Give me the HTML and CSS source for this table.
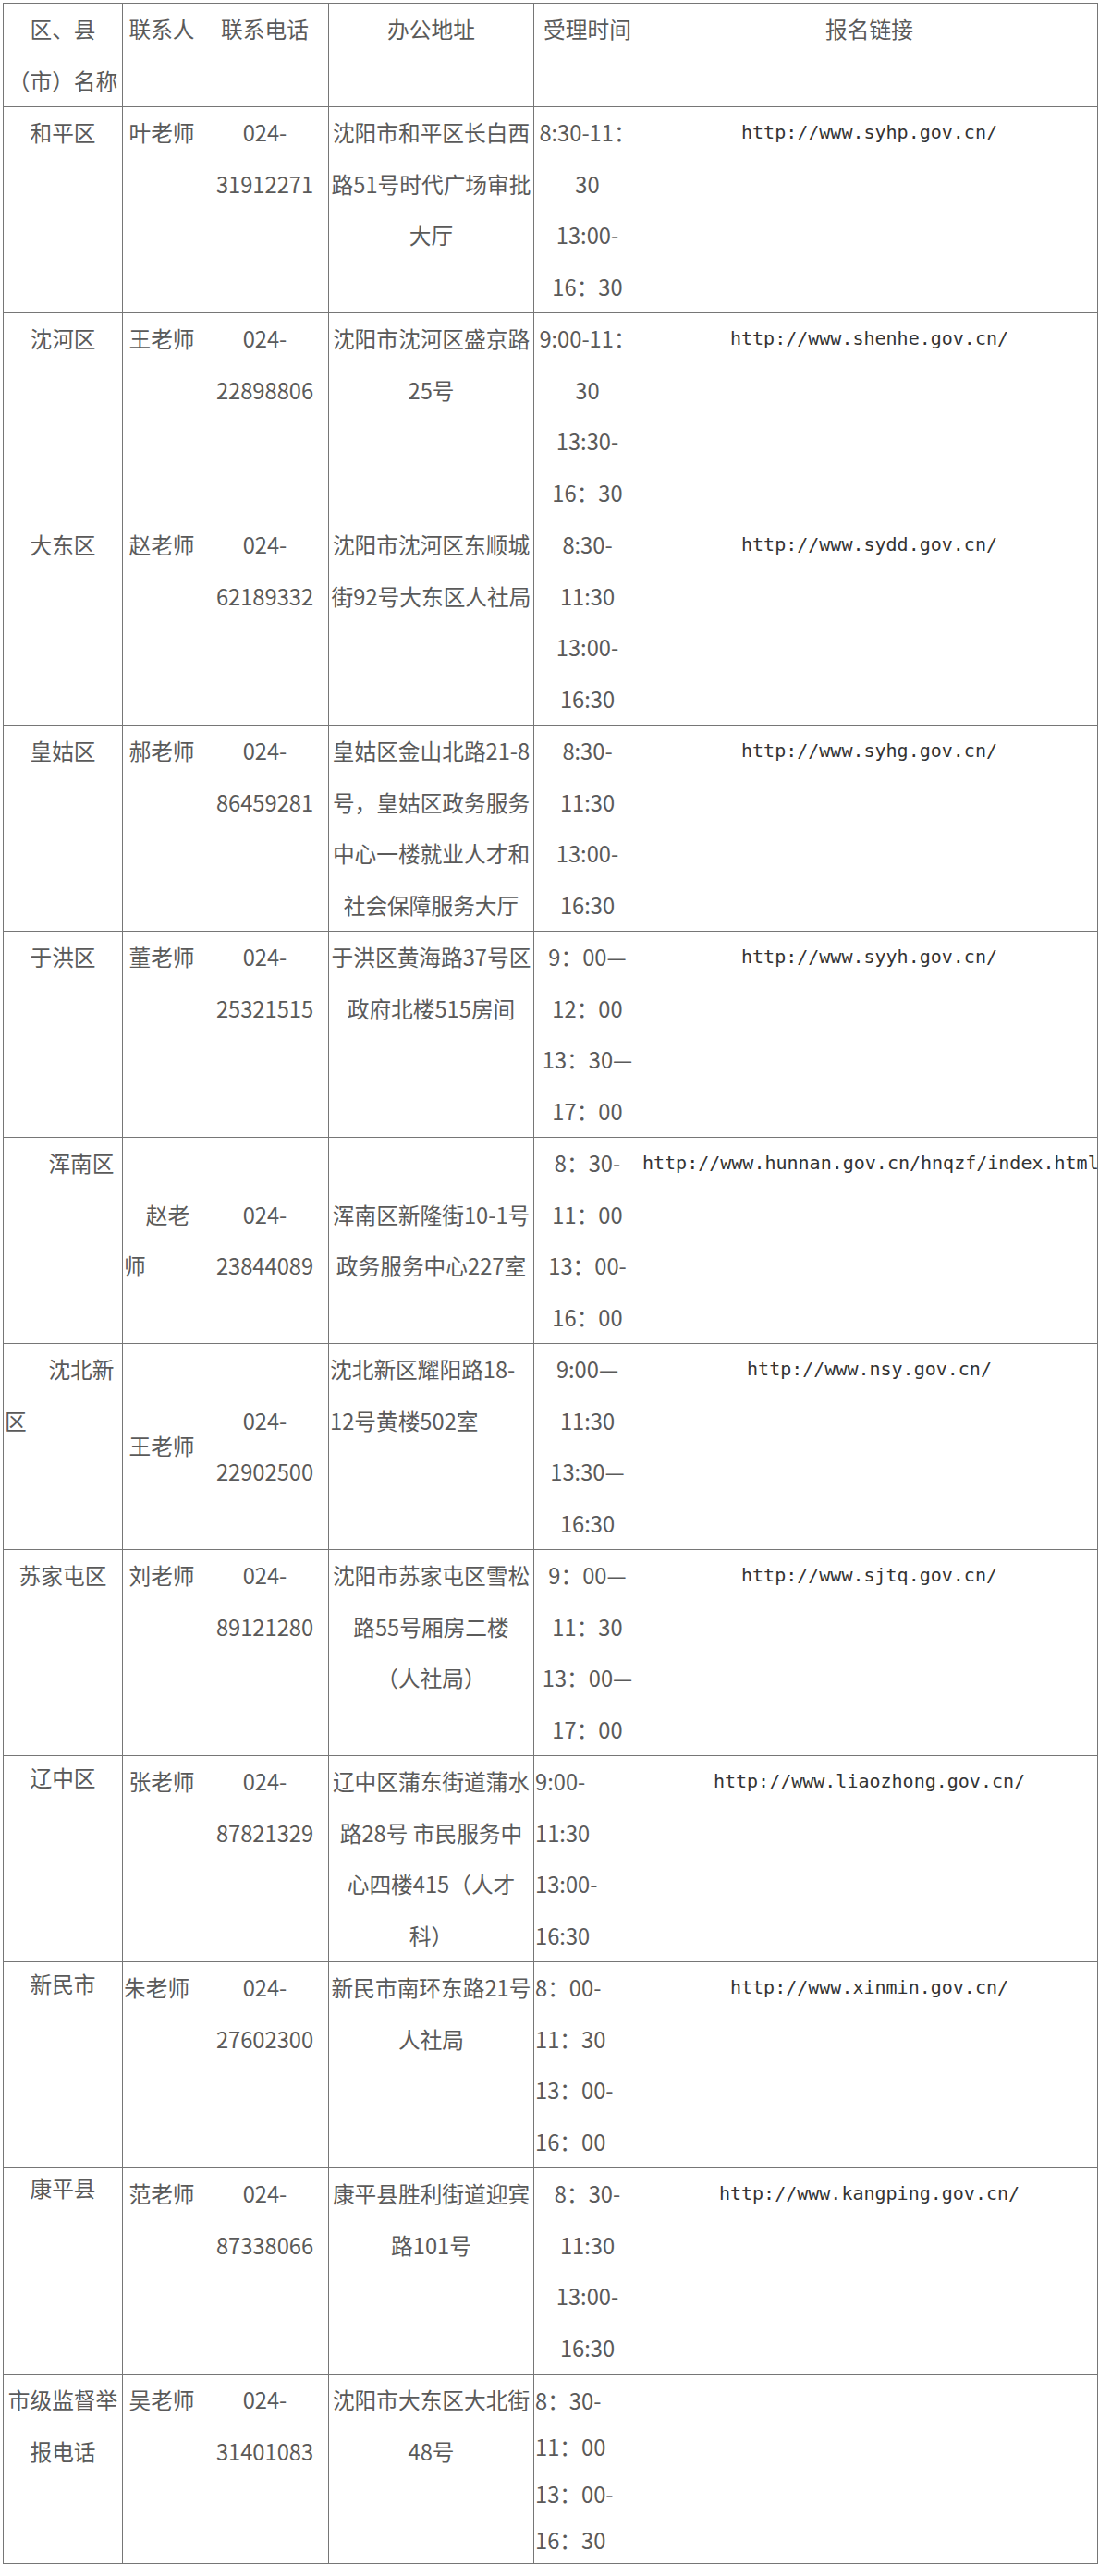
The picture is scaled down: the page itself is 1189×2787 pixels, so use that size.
FILE: index.html
```html
<!DOCTYPE html>
<html lang="zh-CN">
<head>
<meta charset="utf-8">
<title>报名点联系方式</title>
<link rel="stylesheet" href="styles.css">
</head>
<body>
<table class="info">
  <colgroup>
    <col class="c-name"><col class="c-person"><col class="c-phone"><col class="c-addr"><col class="c-time"><col class="c-link">
  </colgroup>
  <thead>
    <tr>
      <th>区、县<br>（市）名称</th>
      <th>联系人</th>
      <th>联系电话</th>
      <th>办公地址</th>
      <th>受理时间</th>
      <th>报名链接</th>
    </tr>
  </thead>
  <tbody>
    <tr>
      <td>和平区</td>
      <td>叶老师</td>
      <td>024-<br>31912271</td>
      <td>沈阳市和平区长白西<br>路51号时代广场审批<br>大厅</td>
      <td>8:30-11：<br>30<br>13:00-<br>16：30</td>
      <td class="url">http://www.syhp.gov.cn/</td>
    </tr>
    <tr>
      <td>沈河区</td>
      <td>王老师</td>
      <td>024-<br>22898806</td>
      <td>沈阳市沈河区盛京路<br>25号</td>
      <td>9:00-11：<br>30<br>13:30-<br>16：30</td>
      <td class="url">http://www.shenhe.gov.cn/</td>
    </tr>
    <tr>
      <td>大东区</td>
      <td>赵老师</td>
      <td>024-<br>62189332</td>
      <td>沈阳市沈河区东顺城<br>街92号大东区人社局</td>
      <td>8:30-<br>11:30<br>13:00-<br>16:30</td>
      <td class="url">http://www.sydd.gov.cn/</td>
    </tr>
    <tr>
      <td>皇姑区</td>
      <td>郝老师</td>
      <td>024-<br>86459281</td>
      <td>皇姑区金山北路21-8<br>号，皇姑区政务服务<br>中心一楼就业人才和<br>社会保障服务大厅</td>
      <td>8:30-<br>11:30<br>13:00-<br>16:30</td>
      <td class="url">http://www.syhg.gov.cn/</td>
    </tr>
    <tr>
      <td>于洪区</td>
      <td>董老师</td>
      <td>024-<br>25321515</td>
      <td>于洪区黄海路37号区<br>政府北楼515房间</td>
      <td>9：00—<br>12：00<br>13：30—<br>17：00</td>
      <td class="url">http://www.syyh.gov.cn/</td>
    </tr>
    <tr>
      <td class="indent2">浑南区</td>
      <td class="indent1 mid">赵老<br>师</td>
      <td class="mid">024-<br>23844089</td>
      <td class="mid">浑南区新隆街10-1号<br>政务服务中心227室</td>
      <td>8：30-<br>11：00<br>13：00-<br>16：00</td>
      <td class="url">http://www.hunnan.gov.cn/hnqzf/index.html</td>
    </tr>
    <tr>
      <td class="indent2">沈北新<br>区</td>
      <td class="mid">王老师</td>
      <td class="mid">024-<br>22902500</td>
      <td class="left">沈北新区耀阳路18-<br>12号黄楼502室</td>
      <td>9:00—<br>11:30<br>13:30—<br>16:30</td>
      <td class="url">http://www.nsy.gov.cn/</td>
    </tr>
    <tr>
      <td>苏家屯区</td>
      <td>刘老师</td>
      <td>024-<br>89121280</td>
      <td>沈阳市苏家屯区雪松<br>路55号厢房二楼<br>（人社局）</td>
      <td>9：00—<br>11：30<br>13：00—<br>17：00</td>
      <td class="url">http://www.sjtq.gov.cn/</td>
    </tr>
    <tr>
      <td class="raised">辽中区</td>
      <td>张老师</td>
      <td>024-<br>87821329</td>
      <td>辽中区蒲东街道蒲水<br>路28号 市民服务中<br>心四楼415（人才<br>科）</td>
      <td class="left">9:00-<br>11:30<br>13:00-<br>16:30</td>
      <td class="url">http://www.liaozhong.gov.cn/</td>
    </tr>
    <tr>
      <td class="raised">新民市</td>
      <td class="left">朱老师</td>
      <td>024-<br>27602300</td>
      <td>新民市南环东路21号<br>人社局</td>
      <td class="left">8：00-<br>11：30<br>13：00-<br>16：00</td>
      <td class="url">http://www.xinmin.gov.cn/</td>
    </tr>
    <tr>
      <td class="raised-more">康平县</td>
      <td>范老师</td>
      <td>024-<br>87338066</td>
      <td>康平县胜利街道迎宾<br>路101号</td>
      <td>8：30-<br>11:30<br>13:00-<br>16:30</td>
      <td class="url">http://www.kangping.gov.cn/</td>
    </tr>
    <tr>
      <td>市级监督举<br>报电话</td>
      <td>吴老师</td>
      <td>024-<br>31401083</td>
      <td>沈阳市大东区大北街<br>48号</td>
      <td class="left tight">8：30-<br>11：00<br>13：00-<br>16：30</td>
      <td class="url"></td>
    </tr>
  </tbody>
</table>
</body>
</html>
```

FILE: styles.css
```css
html, body {
  margin: 0;
  padding: 0;
  background: #ffffff;
}

body {
  padding: 3px 0 0 3px;
}

.info {
  border-collapse: collapse;
  table-layout: fixed;
  width: 1184px;
  font-family: "Noto Sans CJK SC", "Noto Sans", sans-serif;
  font-size: 23.7px;
  color: #5a5a5a;
}

.c-name { width: 129px; }
.c-person { width: 85px; }
.c-phone { width: 138px; }
.c-addr { width: 222px; }
.c-time { width: 116px; }
.c-link { width: 494px; }

.info th,
.info td {
  border: 1px solid #767676;
  padding: 0 1px;
  line-height: 55.5px;
  text-align: center;
  vertical-align: top;
  white-space: nowrap;
  font-weight: normal;
}

.info td.url {
  font-family: "DejaVu Sans Mono", "Liberation Mono", monospace;
  font-size: 20px;
  color: #333333;
  overflow: visible;
}

.info td.left {
  text-align: left;
}

.info td.mid {
  vertical-align: middle;
}

.info td.indent2 {
  text-align: left;
  text-indent: 2em;
}

.info td.indent1 {
  text-align: left;
  text-indent: 1em;
}

.info td.raised {
  line-height: 47px;
}

.info td.raised-more {
  line-height: 42px;
}

.info td.tight {
  line-height: 50.3px;
  padding-top: 3px;
}
```
